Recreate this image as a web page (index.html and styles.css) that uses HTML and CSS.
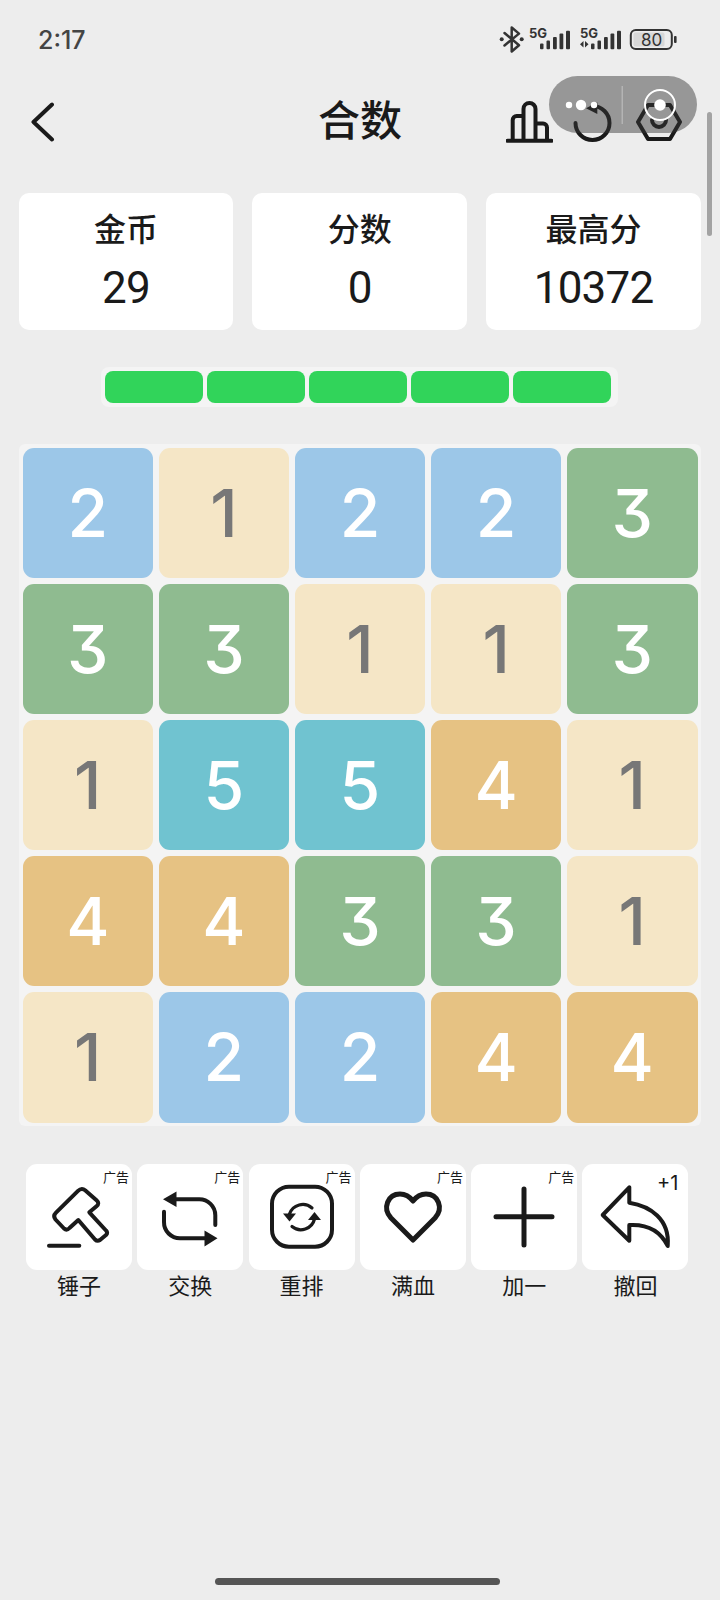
FILE: index.html
```html
<!DOCTYPE html>
<html lang="zh-CN">
<head>
    <meta charset="UTF-8">
    <meta name="viewport" content="width=device-width, initial-scale=1.0">
    <title>合数</title>
    <link rel="stylesheet" href="styles.css">
</head>
<body>
    <div class="status-bar">
        <span class="time">2:17</span>
        <svg class="status-icons" width="180" height="30" viewBox="0 0 180 30">
            <g class="ink-line">
                <path d="M5.5 8 20 20.2 12.7 26.5V2.5L20 8.6 5.5 20.5"/>
            </g>
            <circle class="ink" cx="2.7" cy="14.3" r="2"/>
            <circle class="ink" cx="22.7" cy="14.3" r="2"/>
            <text class="net" x="30" y="12.5">5G</text>
            <g class="ink">
                <rect x="41" y="18.500" width="3.500" height="5.800" rx="1"/>
                <rect x="47.500" y="15.500" width="3.500" height="8.800" rx="1"/>
                <rect x="54" y="12" width="3.800" height="12.300" rx="1"/>
                <rect x="60.500" y="8.500" width="3.800" height="15.800" rx="1"/>
                <rect x="67" y="5.700" width="4" height="18.600" rx="1"/>
            </g>
            <text class="net" x="81" y="12.5">5G</text>
            <g class="ink">
                <path d="M84.500 16v6.500L81 19.200zM86 16v6.500l3.500-3.300z"/>
                <rect x="92" y="18.500" width="3.500" height="5.800" rx="1"/>
                <rect x="98.500" y="15.500" width="3.500" height="8.800" rx="1"/>
                <rect x="105" y="12" width="3.800" height="12.300" rx="1"/>
                <rect x="111.500" y="8.500" width="3.800" height="15.800" rx="1"/>
                <rect x="118" y="5.700" width="4" height="18.600" rx="1"/>
            </g>
            <rect x="134.5" y="7.5" width="31" height="14" rx="2" fill="#d8d8d8"/>
            <rect class="ink-thin" x="131.8" y="5" width="41" height="19" rx="5"/>
            <text class="battery" x="152.5" y="20.5">80</text>
            <rect class="ink" x="175" y="11" width="2.6" height="7" rx="1"/>
        </svg>
    </div>

    <div class="top-bar">
        <svg class="back" width="24" height="40" viewBox="0 0 24 40">
            <path class="ink-line" d="M21 2.500 2.500 20 21 37.500"/>
        </svg>
        <h1>合数</h1>
        <div class="top-actions">
            <svg class="chart" width="47" height="42" viewBox="0 0 47 42">
                <path class="ink-line" d="M1.500 39.700H45.500M6.700 39V19a4 4 0 0 1 4-4h6.600M17.500 39V8a6 6 0 0 1 12 0v31M29.500 22.500H37a4 4 0 0 1 4 4V39"/>
            </svg>
            <svg width="40" height="42" viewBox="0 0 40 42">
                <path class="ink-line" d="M3.500 22A17 17 0 1 0 20.500 5"/>
                <path class="ink" d="M14 7.300 25.300 1.300V13z"/>
            </svg>
            <svg width="46" height="42" viewBox="0 0 46 42">
                <path class="ink-line" d="M2 21 12 38H34L44 21 34 4H12z"/>
                <path class="ink-line" d="M16 19a7 7 0 0 0 14 0"/>
            </svg>
        </div>
    </div>

    <div class="stats">
        <div class="stat"><span class="stat-label">金币</span><span class="stat-value">29</span></div>
        <div class="stat"><span class="stat-label">分数</span><span class="stat-value">0</span></div>
        <div class="stat"><span class="stat-label">最高分</span><span class="stat-value">10372</span></div>
    </div>

    <div class="lives">
        <div class="life"></div>
        <div class="life"></div>
        <div class="life"></div>
        <div class="life"></div>
        <div class="life"></div>
    </div>

    <div class="board">
        <div class="cell n2">2</div>
        <div class="cell n1">1</div>
        <div class="cell n2">2</div>
        <div class="cell n2">2</div>
        <div class="cell n3">3</div>

        <div class="cell n3">3</div>
        <div class="cell n3">3</div>
        <div class="cell n1">1</div>
        <div class="cell n1">1</div>
        <div class="cell n3">3</div>

        <div class="cell n1">1</div>
        <div class="cell n5">5</div>
        <div class="cell n5">5</div>
        <div class="cell n4">4</div>
        <div class="cell n1">1</div>

        <div class="cell n4">4</div>
        <div class="cell n4">4</div>
        <div class="cell n3">3</div>
        <div class="cell n3">3</div>
        <div class="cell n1">1</div>

        <div class="cell n1">1</div>
        <div class="cell n2">2</div>
        <div class="cell n2">2</div>
        <div class="cell n4">4</div>
        <div class="cell n4">4</div>
    </div>

    <div class="tools">
        <div class="tool">
            <div class="tool-card">
                <span class="ad">广告</span>
                <svg width="106" height="106" viewBox="0 0 106 106">
                    <path class="ink-line" d="M30 48.700 52 26.900Q55.700 23.300 59.400 26.500L70.500 36.300Q74 39.300 70.500 42.300L63.300 48.300 80 66.500Q82.300 68.700 80 71L74 76Q71.300 77.700 69 75.500L52.300 56 43.500 64Q40.700 67 38 64.500L29.500 55.500Q26.700 52 30 48.700z"/>
                    <path class="ink-line" d="M23 81.700H53.300"/>
                </svg>
            </div>
            <span class="tool-name">锤子</span>
        </div>
        <div class="tool">
            <div class="tool-card">
                <span class="ad">广告</span>
                <svg width="106" height="106" viewBox="0 0 106 106">
                    <path class="ink-line" d="M39 35.300H62a16 16 0 0 1 16.300 16V61M27 47.700V58a16 16 0 0 0 16 16.300H68"/>
                    <path class="ink" d="M26 35.300 39.500 27.500V43zM80.500 74.300 67.500 66.500V82.500z"/>
                </svg>
            </div>
            <span class="tool-name">交换</span>
        </div>
        <div class="tool">
            <div class="tool-card">
                <span class="ad">广告</span>
                <svg width="106" height="106" viewBox="0 0 106 106">
                    <rect class="ink-line" x="23" y="22.700" width="60" height="60" rx="17"/>
                    <path class="ink-line thin" d="M63 44A14 14 0 0 0 40.500 50M43 62.500A14 14 0 0 0 65.500 55"/>
                    <path class="ink" d="M34 49.500H47L40.500 57.500zM59 56H72L65.500 48z"/>
                </svg>
            </div>
            <span class="tool-name">重排</span>
        </div>
        <div class="tool">
            <div class="tool-card">
                <span class="ad">广告</span>
                <svg width="106" height="106" viewBox="0 0 106 106">
                    <path class="ink-line bold" d="M53 76 31 54C22 44 28 30 40 30 46 30 50 33 53 37 56 33 60 30 66 30 78 30 84 44 75 54z"/>
                </svg>
            </div>
            <span class="tool-name">满血</span>
        </div>
        <div class="tool">
            <div class="tool-card">
                <span class="ad">广告</span>
                <svg width="106" height="106" viewBox="0 0 106 106">
                    <path class="ink-line bold" d="M25 52.700H81M53 25V81"/>
                </svg>
            </div>
            <span class="tool-name">加一</span>
        </div>
        <div class="tool">
            <div class="tool-card">
                <span class="plus-one">+1</span>
                <svg width="106" height="106" viewBox="0 0 106 106">
                    <path class="ink-line" d="M20.700 51 47.300 23.300V38.700C68 42 88 55 85.700 82 78 66 65 60 47.300 61V76.700z"/>
                </svg>
            </div>
            <span class="tool-name">撤回</span>
        </div>
    </div>

    <div class="home-bar"></div>

    <!-- mini program capsule and scrollbar sit over the page -->
    <div class="capsule">
        <svg width="148" height="57" viewBox="0 0 148 57">
            <circle cx="20" cy="29" r="3.200" fill="#fff"/>
            <circle cx="32" cy="29" r="5.200" fill="#fff"/>
            <circle cx="45" cy="29" r="3.200" fill="#fff"/>
            <rect x="72.500" y="10" width="1.500" height="38" fill="#b4b4b4"/>
            <circle cx="111" cy="29" r="15" fill="none" stroke="#fff" stroke-width="2"/>
            <circle cx="111" cy="29" r="5.800" fill="#fff"/>
        </svg>
    </div>
    <div class="scroll-thumb"></div>
</body>
</html>
```

FILE: styles.css
```css
* {
    box-sizing: border-box;
    margin: 0;
    padding: 0;
}

body {
    position: relative;
    width: 720px;
    height: 1600px;
    overflow: hidden;
    background-color: #ededed;
    color: #1a1a1a;
    font-family: Inter, 'Noto Sans CJK SC', sans-serif;
    font-feature-settings: 'cv09' 1;
    display: flex;
    flex-direction: column;
}

/* svg helpers */
.ink {
    fill: #1a1a1a;
}

.ink-line {
    fill: none;
    stroke: #1a1a1a;
    stroke-width: 4;
    stroke-linecap: round;
    stroke-linejoin: round;
}

.ink-line.thin {
    stroke-width: 3.2;
}

.ink-line.bold {
    stroke-width: 5;
}

.ink-thin {
    fill: none;
    stroke: #333;
    stroke-width: 2;
}

/* status bar */
.status-bar {
    height: 80px;
    padding: 25px 41px 25px 38px;
    display: flex;
    justify-content: space-between;
}

.time {
    font-size: 25px;
    font-weight: 500;
    line-height: 30px;
    color: #444;
}

.status-icons .ink {
    fill: #333;
}

.status-icons .ink-line {
    stroke: #333;
    stroke-width: 2.5;
}

.net {
    font-size: 13px;
    font-weight: 700;
    fill: #333;
}

.battery {
    font-size: 17px;
    fill: #333;
    text-anchor: middle;
}

/* top bar */
.top-bar {
    height: 82px;
    padding: 0 38px;
    display: grid;
    grid-template-columns: minmax(0, 1fr) auto minmax(0, 1fr);
    align-items: center;
}

.back {
    margin: 2px 0 0 -7px;
}

.top-bar h1 {
    font-size: 42px;
    font-weight: 500;
    line-height: 82px;
}

.top-actions {
    display: flex;
    justify-content: flex-end;
    gap: 24px;
    padding-top: 2px;
}

.chart {
    margin-right: -5px;
}

/* stats */
.stats {
    margin-top: 31px;
    padding: 0 19px 0 18.5px;
    display: grid;
    grid-template-columns: repeat(3, 1fr);
    gap: 19px;
}

.stat {
    height: 137px;
    background-color: white;
    border-radius: 10px;
    display: flex;
    flex-direction: column;
    align-items: center;
    padding-top: 14px;
}

.stat-label {
    font-size: 32px;
    line-height: 46px;
    font-weight: 500;
}

.stat-value {
    margin-top: 4px;
    font-family: Roboto, sans-serif;
    font-size: 44px;
    line-height: 62px;
    font-weight: 400;
    letter-spacing: -0.8px;
}

/* lives */
.lives {
    align-self: flex-start;
    width: 517px;
    height: 40px;
    margin: 37px 0 0 101px;
    padding: 4px 7px 4px 3.5px;
    background-color: #f4f4f4;
    border-radius: 8px;
    display: flex;
    gap: 4px;
}

.life {
    flex: 1;
    background-color: #31d45a;
    border-radius: 8px;
}

/* board */
.board {
    width: 682px;
    height: 682px;
    margin: 37px 0 0 19px;
    padding: 3.5px;
    background-color: #f4f4f4;
    border-radius: 6px;
    display: grid;
    grid-template-columns: repeat(5, 1fr);
    grid-template-rows: repeat(5, 1fr);
    gap: 5.5px;
}

.cell {
    border-radius: 11px;
    display: flex;
    align-items: center;
    justify-content: center;
    color: white;
    font-size: 66px;
    font-weight: 500;
}

.n1 {
    background-color: #f5e6c6;
    color: #777;
}

.n2 {
    background-color: #9cc7e8;
}

.n3 {
    background-color: #8fbb90;
}

.n4 {
    background-color: #e6c283;
}

.n5 {
    background-color: #70c3d0;
}

/* tools */
.tools {
    margin: 38px 0 0 26px;
    display: flex;
    gap: 5.3px;
}

.tool {
    width: 106px;
    display: flex;
    flex-direction: column;
    align-items: center;
}

.tool-card {
    position: relative;
    width: 106px;
    height: 106px;
    background-color: white;
    border-radius: 11px;
}

.tool-card svg {
    display: block;
}

.ad {
    position: absolute;
    top: 4px;
    right: 3px;
    font-size: 13px;
    line-height: 18px;
}

.plus-one {
    position: absolute;
    top: 7px;
    right: 10px;
    font-size: 20px;
    line-height: 24px;
}

.tool-name {
    margin-top: 1px;
    font-size: 22px;
    line-height: 30px;
}

/* bottom */
.home-bar {
    width: 285px;
    height: 7px;
    margin: auto 0 15px 215px;
    background-color: #555;
    border-radius: 4px;
}

.capsule {
    position: absolute;
    top: 76px;
    left: 549px;
    width: 148px;
    height: 57px;
    background-color: rgba(56, 56, 56, 0.47);
    border-radius: 29px;
}

.scroll-thumb {
    position: absolute;
    top: 112px;
    left: 707px;
    width: 5px;
    height: 124px;
    background-color: #a3a3a3;
    border-radius: 3px;
}
```
